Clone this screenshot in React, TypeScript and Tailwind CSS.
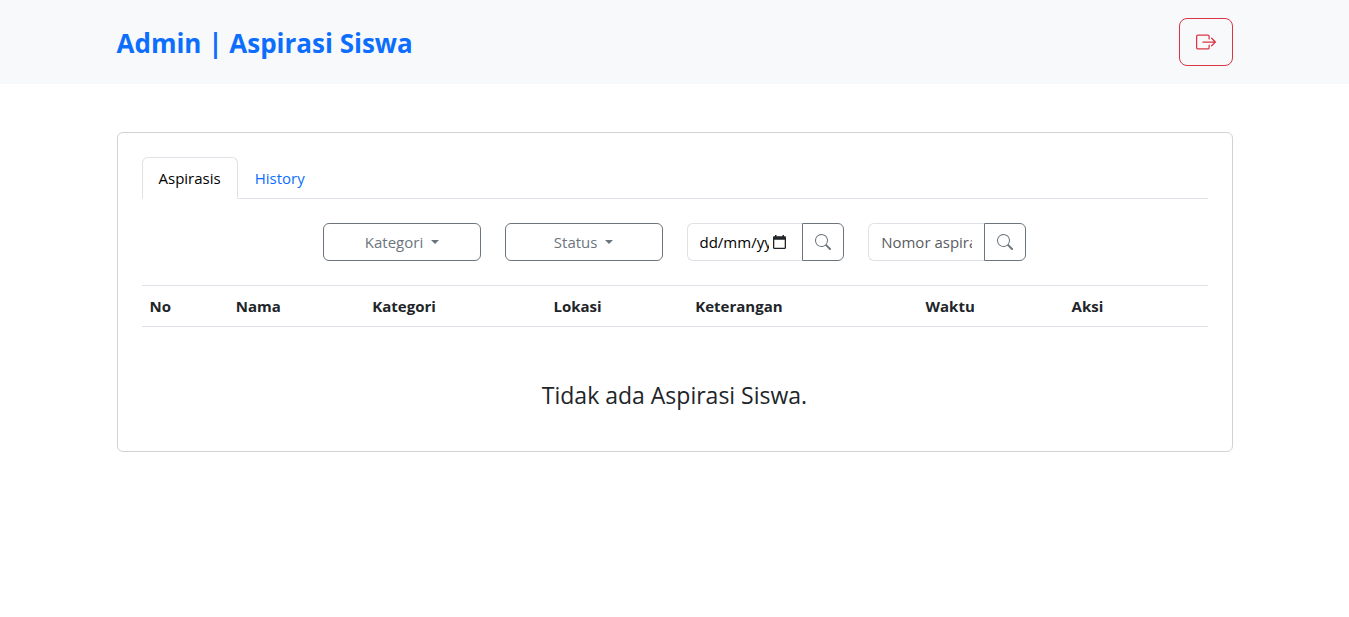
import { useState } from "react";
import { BsBoxArrowRight, BsSearch } from "react-icons/bs";

const columns = [
  { label: "No", width: "w-[8.1%]" },
  { label: "Nama", width: "w-[12.8%]" },
  { label: "Kategori", width: "w-[17%]" },
  { label: "Lokasi", width: "w-[13.3%]" },
  { label: "Keterangan", width: "w-[21.6%]" },
  { label: "Waktu", width: "w-[13.7%]" },
  { label: "Aksi", width: "w-[13.5%]" },
];

function DropdownButton({ label, className = "" }: { label: string; className?: string }) {
  return (
    <button
      type="button"
      aria-haspopup="menu"
      className={`flex h-[38px] min-w-0 items-center justify-center gap-2 rounded-md border border-[#6c757d] text-[#6c757d] hover:bg-[#6c757d] hover:text-white ${className}`}
    >
      {label}
      <span className="border-x-4 border-t-4 border-x-transparent border-t-current" />
    </button>
  );
}

function SearchButton({ label }: { label: string }) {
  return (
    <button
      type="submit"
      aria-label={label}
      className="flex w-[42px] shrink-0 items-center justify-center rounded-r-md border border-[#6c757d] text-[#6c757d] hover:bg-[#6c757d] hover:text-white"
    >
      <BsSearch size={16} />
    </button>
  );
}

function CalendarIcon() {
  return (
    <svg width="13" height="14" viewBox="0 0 13 14" fill="currentColor" aria-hidden="true" className="shrink-0">
      <path
        fillRule="evenodd"
        d="M2 0h1.500v1.200h6V0H11v1.200h.8c.7 0 1.200.5 1.200 1.200v10.400c0 .7-.5 1.200-1.200 1.200H1.200C.5 14 0 13.500 0 12.800V2.400c0-.7.5-1.200 1.200-1.200H2zM1.300 4.800v7.900h10.400V4.800z"
      />
    </svg>
  );
}

export default function App() {
  const [tab, setTab] = useState("Aspirasis");

  return (
    <div className="font-['Open_Sans','Noto_Sans',sans-serif] text-[15px] leading-6 text-[#212529]">
      <header className="bg-[#f8f9fa]">
        <div className="mx-auto flex max-w-[1140px] items-center justify-between px-3 py-[18px]">
          <a href="#" className="pt-0.5 text-[26px] leading-10 font-bold text-[#0d6efd]">
            Admin | Aspirasi Siswa
          </a>
          <button
            type="button"
            aria-label="Logout"
            className="flex h-12 items-center rounded-lg border border-[#dc3545] px-4 text-[#dc3545] hover:bg-[#dc3545] hover:text-white"
          >
            <BsBoxArrowRight size={20} />
          </button>
        </div>
      </header>

      <main className="mx-auto max-w-[1140px] px-3 py-12">
        <section className="rounded-md border border-[#d2d2d3] p-6">
          <div role="tablist" className="flex border-b border-[#dee2e6]">
            {["Aspirasis", "History"].map((name) => (
              <button
                key={name}
                type="button"
                role="tab"
                aria-selected={tab === name}
                onClick={() => setTab(name)}
                className={
                  tab === name
                    ? "-mb-px rounded-t-md border border-[#dee2e6] border-b-white bg-white px-4 py-2 text-black"
                    : "-mb-px rounded-t-md border border-transparent px-4 py-2 text-[#0d6efd]"
                }
              >
                {name}
              </button>
            ))}
          </div>

          <div className="my-6 grid grid-cols-6 gap-6">
            <DropdownButton label="Kategori" className="col-start-2" />
            <DropdownButton label="Status" />
            <form className="flex h-[38px] min-w-0" onSubmit={(e) => e.preventDefault()}>
              <label className="flex min-w-0 flex-1 items-center gap-1 rounded-l-md border border-r-0 border-[#dee2e6] pr-4 pl-3">
                <span className="sr-only">Tanggal</span>
                <input
                  type="text"
                  placeholder="dd/mm/yyyy"
                  className="w-full min-w-0 flex-1 text-black outline-none placeholder:text-black"
                />
                <CalendarIcon />
              </label>
              <SearchButton label="Cari tanggal" />
            </form>
            <form className="flex h-[38px] min-w-0" onSubmit={(e) => e.preventDefault()}>
              <input
                type="text"
                aria-label="Nomor aspirasi"
                placeholder="Nomor aspirasi"
                className="w-full min-w-0 flex-1 rounded-l-md border border-r-0 border-[#dee2e6] px-3 outline-none placeholder:text-[#595c5f]"
              />
              <SearchButton label="Cari nomor aspirasi" />
            </form>
          </div>

          <table className="w-full table-fixed text-left">
            <thead>
              <tr className="border-y border-[#dee2e6]">
                {columns.map((column) => (
                  <th key={column.label} scope="col" className={`p-2 font-bold ${column.width}`}>
                    {column.label}
                  </th>
                ))}
              </tr>
            </thead>
          </table>

          <p className="mt-12 mb-3 text-center text-[23px] leading-10">Tidak ada Aspirasi Siswa.</p>
        </section>
      </main>
    </div>
  );
}
